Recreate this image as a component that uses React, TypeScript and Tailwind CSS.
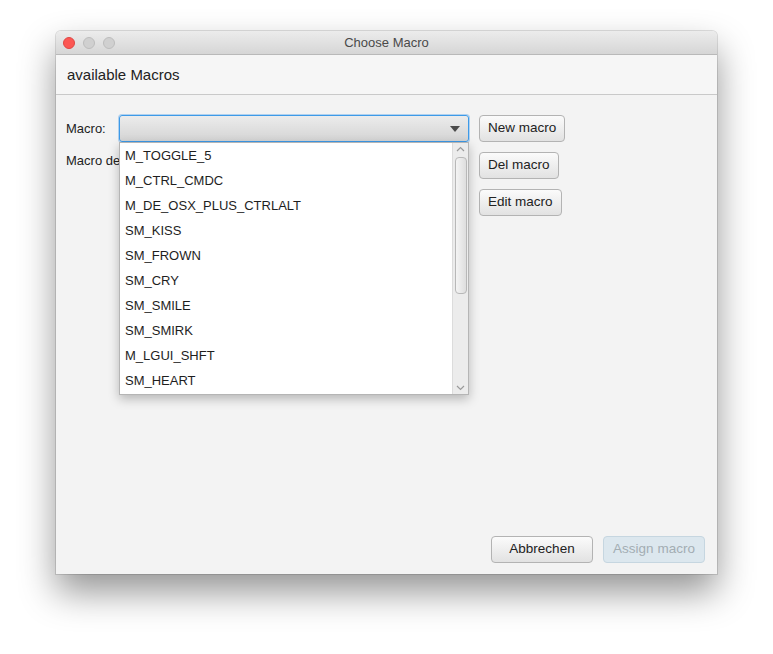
import React from 'react';

const macros = [
  'M_TOGGLE_5',
  'M_CTRL_CMDC',
  'M_DE_OSX_PLUS_CTRLALT',
  'SM_KISS',
  'SM_FROWN',
  'SM_CRY',
  'SM_SMILE',
  'SM_SMIRK',
  'M_LGUI_SHFT',
  'SM_HEART',
];

function Btn({ children, disabled = false, className = '' }: { children: React.ReactNode; disabled?: boolean; className?: string }) {
  return (
    <button
      className={`h-[27px] rounded-[4px] border text-[13.5px] px-[8px] ${
        disabled
          ? 'border-[#c6d6e0] bg-[#dce7ee] text-[#a3adb3]'
          : 'border-[#b3b3b3] bg-gradient-to-b from-[#fbfbfb] to-[#e2e2e2] text-[#222]'
      } ${className}`}
    >
      {children}
    </button>
  );
}

export default function App() {
  return (
    <div className="w-[773px] h-[654px] bg-white pt-[31px] pl-[56px]" style={{ fontFamily: '"Liberation Sans", Arial, sans-serif' }}>
      <div className="relative w-[661px] h-[543px] bg-[#f3f3f3] rounded-t-[5px] shadow-[0_18px_36px_rgba(0,0,0,0.42),0_0_0_1px_rgba(0,0,0,0.12)] flex flex-col">
        {/* title bar */}
        <div className="h-[24px] rounded-t-[5px] bg-gradient-to-b from-[#ececec] to-[#d6d6d6] border-b border-[#b9b9b9] flex items-center relative">
          <div className="flex gap-[8px] pl-[7px] pt-[1px]">
            <span className="w-[12px] h-[12px] rounded-full bg-[#fc5753] border border-[#df4744]" />
            <span className="w-[12px] h-[12px] rounded-full bg-[#d0d0d0] border border-[#bdbdbd]" />
            <span className="w-[12px] h-[12px] rounded-full bg-[#d0d0d0] border border-[#bdbdbd]" />
          </div>
          <div className="absolute inset-0 flex items-center justify-center pt-[1px] text-[13px] text-[#4a4a4a]">Choose Macro</div>
        </div>
        {/* header */}
        <div className="h-[40px] bg-[#f6f6f6] border-b border-[#c9c9c9] flex items-center pl-[11px] pt-[1px] text-[15px] text-[#222]">
          available Macros
        </div>
        {/* body */}
        <div className="flex-1 flex flex-col pl-[10px] pr-[12px] pt-[20px] pb-[11px]">
          <div className="flex">
            <div className="flex flex-col">
              <div className="flex items-center h-[27px]">
                <span className="w-[53px] text-[13px] text-[#222]">Macro:</span>
                <div className="relative w-[350px] h-[27px] rounded-[3px] border border-[#3d9ae8] shadow-[0_0_0_1px_rgba(110,175,235,0.5)] bg-gradient-to-b from-[#ececec] to-[#d4d4d4] flex items-center justify-end pr-[8px]">
                  <svg width="10" height="6" viewBox="0 0 10 6"><path d="M0 0h10L5 6z" fill="#4a4a4a" /></svg>
                  {/* dropdown */}
                  <div className="absolute left-[-1px] top-[26px] w-[350px] h-[253px] bg-white border border-[#b5b5b5] shadow-[0_4px_10px_rgba(0,0,0,0.25)] flex z-10">
                    <div className="flex-1 flex flex-col">
                      {macros.map((m) => (
                        <div key={m} className="h-[25px] flex items-center pl-[5px] pt-[1px] text-[13px] text-[#1e1e1e]">
                          {m}
                        </div>
                      ))}
                    </div>
                    <div className="w-[16px] bg-[#ececec] border-l border-[#dcdcdc] flex flex-col items-center">
                      <svg className="mt-[3px]" width="9" height="6" viewBox="0 0 9 6"><path d="M1 5l3.5-3.5L8 5" stroke="#9a9a9a" fill="none" strokeWidth="1.2" /></svg>
                      <div className="mt-[5px] w-[12px] h-[137px] rounded-[4px] border border-[#b8b8b8] bg-gradient-to-r from-[#f4f4f4] to-[#dedede]" />
                      <div className="flex-1" />
                      <svg className="mb-[3px]" width="9" height="6" viewBox="0 0 9 6"><path d="M1 1l3.5 3.5L8 1" stroke="#9a9a9a" fill="none" strokeWidth="1.2" /></svg>
                    </div>
                  </div>
                </div>
              </div>
              <div className="flex items-center h-[26px] mt-[6px]">
                <span className="text-[13px] text-[#222]">Macro description:</span>
              </div>
            </div>
            <div className="flex flex-col items-start gap-[10px] ml-[10px]">
              <Btn>New macro</Btn>
              <Btn>Del macro</Btn>
              <Btn>Edit macro</Btn>
            </div>
          </div>
          <div className="flex-1" />
          <div className="flex justify-end gap-[10px]">
            <Btn className="w-[102px]">Abbrechen</Btn>
            <Btn disabled className="w-[102px]">Assign macro</Btn>
          </div>
        </div>
      </div>
    </div>
  );
}
